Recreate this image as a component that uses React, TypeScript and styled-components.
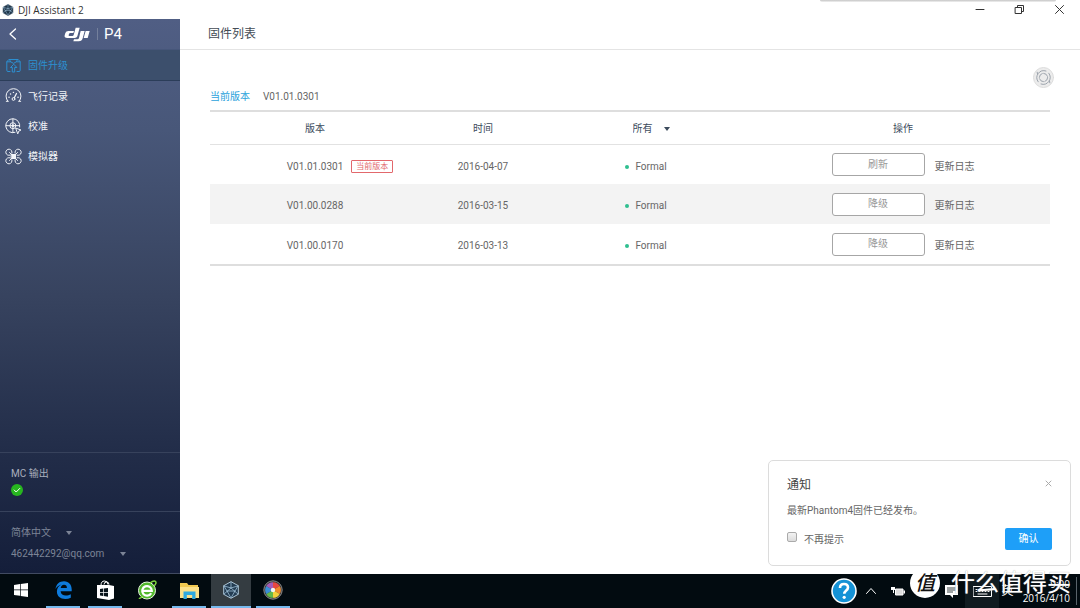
import React from "react";
import styled, { createGlobalStyle, css } from "styled-components";

const GlobalStyle = createGlobalStyle`
  *, *::before, *::after { box-sizing: border-box; }
  body {
    margin: 0;
    background: #fff;
    color: #666;
    font: 10px/16px Roboto, "Noto Sans CJK SC", sans-serif;
  }
  button, select, input { font: inherit; color: inherit; margin: 0; }
  button { padding: 0; border: 0; background: none; cursor: pointer; }
  a { color: inherit; text-decoration: none; }
  svg { display: block; flex: none; }
`;

const Desktop = styled.div`
  position: relative;
  display: flex;
  flex-direction: column;
  min-height: 100vh;
`;

const TitleBar = styled.header`
  display: flex;
  align-items: center;
  gap: 4px;
  height: 19px;
  padding: 0 14px 0 2px;
  color: #333;
  font-family: "Open Sans", sans-serif;
`;

const WindowTitle = styled.span`
  flex: 1;
`;

const WindowControls = styled.div`
  display: flex;
  gap: 28px;
`;

const BackWindowEdge = styled.div`
  position: absolute;
  top: 0;
  right: 24px;
  width: 236px;
  height: 2px;
  border-radius: 0 0 2px 2px;
  background: linear-gradient(#c4c4c4, #f2f2f2);
`;

const Workspace = styled.div`
  display: flex;
  flex: 1;
`;

const Sidebar = styled.aside`
  display: flex;
  flex-direction: column;
  width: 180px;
  border-bottom: 1px solid #414b62;
  background: linear-gradient(#505e84 0, #485779 20%, #37435f 50%, #222d49 78%, #141e3a 100%);
`;

const Brand = styled.div`
  display: flex;
  align-items: center;
  height: 31px;
  padding-left: 8px;
  border-bottom: 1px solid #46567a;
  color: #fff;
`;

const BackButton = styled.button`
  margin-right: 47px;
`;

const Model = styled.span`
  margin-left: 7px;
  padding-left: 6px;
  border-left: 1px solid #74809c;
  font-size: 15px;
  line-height: 12px;
`;

const Nav = styled.nav`
  flex: 1;
`;

const NavItem = styled.a<{ $active?: boolean }>`
  display: flex;
  align-items: center;
  gap: 6px;
  height: 30px;
  padding-left: 5px;
  color: #f2f4f8;
  ${(p) =>
    p.$active &&
    css`
      height: 31px;
      border-bottom: 1px solid #2b3d59;
      background: #3c4f6c;
      color: #2d8fd0;
    `}
`;

const NavText = styled.span`
  padding-top: 2px;
`;

const SideSection = styled.section<{ $tall?: boolean }>`
  display: flex;
  flex-direction: column;
  align-items: flex-start;
  gap: ${(p) => (p.$tall ? 5 : 2)}px;
  padding: 13px 11px ${(p) => (p.$tall ? 11 : 15)}px;
  border-top: 1px solid #37425c;
  color: ${(p) => (p.$tall ? "#7c8496" : "#a9afbd")};
`;

const SelectWrap = styled.label`
  position: relative;
  display: inline-flex;
  align-items: center;
`;

const Select = styled.select<{ $gap: number }>`
  appearance: none;
  height: 16px;
  padding: 0 ${(p) => p.$gap + 7}px 0 0;
  border: 0;
  background: transparent;
`;

const Caret = styled.svg`
  position: absolute;
  right: 0;
  pointer-events: none;
`;

const Main = styled.main`
  position: relative;
  flex: 1;
`;

const PageTitle = styled.h1`
  height: 31px;
  margin: 0;
  padding: 0 28px;
  border-bottom: 1px solid #e4e4e4;
  color: #444b55;
  font-size: 12px;
  font-weight: 400;
  line-height: 31px;
`;

const Content = styled.div`
  display: flex;
  flex-direction: column;
  padding: 17px 30px 0;
`;

const RefreshButton = styled.button`
  align-self: flex-end;
  margin-right: -4px;
`;

const Current = styled.p`
  display: flex;
  gap: 13px;
  margin: 0 0 5px;
  line-height: 17px;
`;

const CurrentLabel = styled.span`
  color: #2ba3dc;
`;

const Table = styled.table`
  width: 100%;
  table-layout: fixed;
  border-spacing: 0;
  border-top: 2px solid #dedede;
  border-bottom: 2px solid #dedede;
  text-align: center;
`;

const Col = styled.col<{ $share: number }>`
  width: ${(p) => p.$share}%;
`;

const HeadCell = styled.th`
  height: 32px;
  padding: 2px 0 0;
  color: #3c4b5c;
  font-weight: 400;
`;

const Row = styled.tr`
  &:nth-child(even) { background: #f3f3f3; }
  &:first-child td { border-top: 1px solid #e2e2e2; }
`;

const Cell = styled.td`
  height: 40px;
  padding: 4px 0 0;
`;

const ActionCell = styled.td`
  padding: 0;
`;

const Anchor = styled.span`
  position: relative;
`;

const CurrentBadge = styled.span`
  position: absolute;
  left: 100%;
  top: -1px;
  width: 42px;
  margin-left: 8px;
  border: 1px solid #e2686c;
  border-radius: 1px;
  background: #fff;
  color: #e2686c;
  font-size: 8px;
  line-height: 11px;
`;

const Dot = styled.i`
  position: absolute;
  right: 100%;
  top: 4px;
  width: 4px;
  height: 4px;
  margin-right: 6px;
  border-radius: 50%;
  background: #2fbf8f;
`;

const Actions = styled.div`
  display: flex;
  justify-content: center;
  align-items: center;
  gap: 10px;
`;

const OutlineButton = styled.button`
  width: 93px;
  height: 23px;
  border: 1px solid #a6a6a6;
  border-radius: 3px;
  background: #fff;
  color: #999;
`;

const LogLink = styled.a`
  padding-top: 4px;
`;

const Notice = styled.section`
  position: absolute;
  right: 9px;
  bottom: 8px;
  width: 303px;
  padding: 16px 18px 15px;
  border: 1px solid #dcdcdc;
  border-radius: 5px;
  background: #fff;
`;

const NoticeLine = styled.div`
  display: flex;
  align-items: center;
  justify-content: space-between;
`;

const NoticeTitle = styled.h2`
  margin: 0;
  color: #444;
  font-size: 12px;
  font-weight: 400;
`;

const CloseButton = styled.button`
  padding-bottom: 4px;
`;

const NoticeText = styled.p`
  margin: 10px 0 9px;
`;

const CheckLabel = styled.label`
  display: flex;
  align-items: center;
  gap: 7px;
  padding-top: 2px;
`;

const Checkbox = styled.input`
  appearance: none;
  width: 10px;
  height: 10px;
  margin-bottom: 6px;
  border: 1px solid #aaa;
  border-radius: 2px;
  background: linear-gradient(#f3f3f3, #dcdcdc);
`;

const ConfirmButton = styled.button`
  width: 47px;
  height: 22px;
  border-radius: 2px;
  background: #1e9ff8;
  color: #fff;
`;

const Taskbar = styled.footer`
  display: flex;
  justify-content: space-between;
  height: 34px;
  background: #020b10;
  color: #fff;
`;

const Apps = styled.div`
  display: flex;
`;

const AppButton = styled.button<{ $state?: "open" | "active" }>`
  display: flex;
  align-items: center;
  justify-content: center;
  width: ${(p) => (p.$state === "active" ? 40 : 34)}px;
  margin: 0 ${(p) => (p.$state === "active" ? 1 : 4)}px;
  border-bottom: 2px solid ${(p) => (p.$state ? "#76b9ed" : "transparent")};
  background: ${(p) => (p.$state === "active" ? "#343c41" : "none")};
`;

const Tray = styled.div`
  display: flex;
  align-items: center;
  padding-right: 3px;
`;

const TrayButton = styled.button<{ $width: number; $lit?: boolean }>`
  display: flex;
  align-items: center;
  justify-content: center;
  width: ${(p) => p.$width}px;
  height: 34px;
  background: ${(p) => (p.$lit ? "#101b20" : "none")};
  color: #fff;
  font-size: 12px;
`;

const Clock = styled.time`
  width: 61px;
  padding-right: 6px;
  border-right: 1px solid #59636a;
  font: 10px/14px "Open Sans", sans-serif;
  text-align: right;
`;

const Watermark = styled.div`
  position: absolute;
  right: 9px;
  bottom: 10px;
  display: flex;
  align-items: center;
  gap: 11px;
  color: #fff;
  font-size: 24px;
  line-height: 30px;
  text-shadow: 0 0 1px #999;
  pointer-events: none;
`;

const Seal = styled.span`
  width: 30px;
  height: 30px;
  border-radius: 50%;
  background: #fff;
  color: #111;
  font: italic 500 20px/28px "Noto Sans CJK SC", sans-serif;
  text-align: center;
  text-shadow: none;
`;

const line = { fill: "none", stroke: "currentColor", strokeLinecap: "round", strokeLinejoin: "round" } as const;

const CubeIcon = ({ size, dark }: { size: number; dark?: boolean }) => (
  <svg width={size} height={size} viewBox="0 0 16 16" aria-hidden="true">
    <path d="M8 .6 14.5 4.2v7.6L8 15.4 1.5 11.8V4.2z" fill={dark ? "#1d3448" : "#233c52"} stroke={dark ? "#2b4052" : "#b9d2e4"} strokeWidth=".8" />
    <path d="M8 .8v5.4L1.8 11.6M8 6.2l6.2 5.4M1.8 4.4 8 6.2l6.2-1.8M4.6 9.2 8 15l3.4-5.8zM4.6 9.2 1.8 4.4M11.4 9.2l2.8-4.8" {...line} stroke="#9fc0d8" strokeWidth=".7" />
  </svg>
);

const DjiLogo = () => (
  <svg width="26" height="15" viewBox="0 0 78 45" role="img" aria-label="DJI">
    <path d="M35 2h12l-7 26q-2 5-8 5H10Q0 33 2 25l2-7q2-6 9-6h17l-2 6H19q-3 0-4 3l-1 3q-1 3 2 3h9q3 0 4-3z" fill="#fff" />
    <path d="M50 12h12l-6 22q-2 9-12 9H28l2-6h10q4 0 5-4z" fill="#fff" />
    <path d="M65 12h12l-6 21H59z" fill="#fff" />
  </svg>
);

const FirmwareIcon = () => (
  <svg width="17" height="17" viewBox="0 0 17 17" {...line} aria-hidden="true">
    <path d="M5 14.500H3q-1.200 0-1.200-1.200V4.800L3.800 2.500h9.400l2 2.300v8.500q0 1.200-1.200 1.200h-2M2 4.800h3.700L4.500 2.700M15 4.800h-3.700l1.200-2.100M5.700 4.800 8.500 6.400l2.800-1.600" />
    <path d="M8.500 7.500 5.500 10.500h1.800v4.500h2.400v-4.500h1.800z" />
  </svg>
);

const GaugeIcon = () => (
  <svg width="17" height="17" viewBox="0 0 17 17" {...line} aria-hidden="true">
    <path d="M3 13.300A7.500 7.500 0 1 1 14 13.300M1.300 13.300H3M14 13.300h1.700" />
    <path d="m11.500 5.500-2.200 4.200" strokeWidth="1.300" />
    <circle cx="8.500" cy="11" r="1.400" />
    <path d="M4 9.200h.1M5.500 6h.1M8.400 4.400h.1M13 9.200h.1" strokeWidth="1.400" />
  </svg>
);

const CalibrateIcon = () => (
  <svg width="17" height="17" viewBox="0 0 17 17" {...line} aria-hidden="true">
    <path d="M10 14.400A7 7 0 1 1 14.700 9" />
    <circle cx="7.900" cy="7.700" r="3" />
    <path d="M7.900 1v13.500M1 7.700h13.500" />
    <circle cx="7.900" cy="7.700" r="1" fill="currentColor" />
    <path d="m11 10.200 5 1.800-2.200 1.100-.9 2.400z" fill="#465577" />
  </svg>
);

const DroneIcon = () => (
  <svg width="17" height="17" viewBox="0 0 17 17" {...line} aria-hidden="true">
    <path d="M6.900 5.200A3.100 3.100 0 1 0 5 7.200M10.100 5.200A3.100 3.100 0 1 1 12 7.200M6.900 11.800A3.100 3.100 0 1 1 5 9.800M10.100 11.800A3.100 3.100 0 1 0 12 9.800" />
    <path d="m4.500 4.500 8 8M12.500 4.500l-8 8" />
    <path d="M6.500 6.500h4v4h-4z" fill="currentColor" />
  </svg>
);

const Dropdown = ({ label, value, gap }: { label: string; value: string; gap: number }) => (
  <SelectWrap>
    <Select aria-label={label} $gap={gap} defaultValue={value}>
      <option>{value}</option>
    </Select>
    <Caret width="6" height="4" viewBox="0 0 6 4">
      <path d="M0 0h6L3 4z" fill="currentColor" />
    </Caret>
  </SelectWrap>
);

const firmware = [
  { version: "V01.01.0301", date: "2016-04-07", action: "刷新", current: true },
  { version: "V01.00.0288", date: "2016-03-15", action: "降级", current: false },
  { version: "V01.00.0170", date: "2016-03-13", action: "降级", current: false },
];

const FirmwareTable = () => (
  <Table>
    <colgroup>
      <Col $share={25} />
      <Col $share={15} />
      <Col $share={25} />
      <Col $share={35} />
    </colgroup>
    <thead>
      <tr>
        <HeadCell scope="col">版本</HeadCell>
        <HeadCell scope="col">时间</HeadCell>
        <HeadCell scope="col">
          <Dropdown label="类型" value="所有" gap={10} />
        </HeadCell>
        <HeadCell scope="col">操作</HeadCell>
      </tr>
    </thead>
    <tbody>
      {firmware.map((f) => (
        <Row key={f.version}>
          <Cell>
            <Anchor>
              {f.version}
              {f.current && <CurrentBadge>当前版本</CurrentBadge>}
            </Anchor>
          </Cell>
          <Cell>{f.date}</Cell>
          <Cell>
            <Anchor>
              <Dot />
              Formal
            </Anchor>
          </Cell>
          <ActionCell>
            <Actions>
              <OutlineButton>{f.action}</OutlineButton>
              <LogLink href="#log">更新日志</LogLink>
            </Actions>
          </ActionCell>
        </Row>
      ))}
    </tbody>
  </Table>
);

const Notification = () => (
  <Notice>
    <NoticeLine>
      <NoticeTitle>通知</NoticeTitle>
      <CloseButton aria-label="关闭">
        <svg width="7" height="7" viewBox="0 0 7 7" {...line} stroke="#aaa">
          <path d="m1 1 5 5m0-5-5 5" />
        </svg>
      </CloseButton>
    </NoticeLine>
    <NoticeText>最新Phantom4固件已经发布。</NoticeText>
    <NoticeLine>
      <CheckLabel>
        <Checkbox type="checkbox" />
        不再提示
      </CheckLabel>
      <ConfirmButton>确认</ConfirmButton>
    </NoticeLine>
  </Notice>
);

const wheel = ["#e8473f", "#f08a2c", "#f4d03a", "#64b84a", "#3a8fd6", "#a45bb8"];

const SystemBar = () => (
  <Taskbar>
    <Apps>
      <AppButton aria-label="开始">
        <svg width="14" height="14" viewBox="0 0 14 14" fill="#fff">
          <path d="M0 2l6-.9v5.500H0zM6.700 1 14 0v6.600H6.700zM0 7.300h6v5.500L0 12zM6.700 7.300H14V14l-7.300-1z" />
        </svg>
      </AppButton>
      <AppButton aria-label="Edge" $state="open">
        <svg width="17" height="18" viewBox="0 0 17 18">
          <path d="M.5 8C1.200 3 4.500.3 9 .3c5 0 7.700 3.700 7.700 8v2H5.600c.2 3 2.500 4.200 5.200 4.200 1.900 0 3.600-.5 5-1.300v3.500c-1.600.8-3.500 1.200-5.500 1.200-5 0-8.400-2.900-8.400-7.500 0-3 1.700-5.500 4.500-6.800C3.700 4.400 1.700 5.800.5 8zm5.200-1h6.200c0-2-1-3.200-2.900-3.200S6 5.100 5.700 7z" fill="#0e7bdc" />
        </svg>
      </AppButton>
      <AppButton aria-label="应用商店" $state="open">
        <svg width="19" height="20" viewBox="0 0 19 20">
          <path d="M5 5.500Q5 1 8.500 1T12 4.500M8 4.500Q8 2 10.500 2T13 4.500" fill="none" stroke="#fff" />
          <path d="M1 5h12l5 1v12.500L13 20 1 18z" fill="#fff" />
          <path d="M4 9l3-.4V12H4zM7.700 8.500 12 8v4H7.700zM4 12.700h3V16l-3-.4zM7.700 12.700H12v4l-4.300-.6z" fill="#07131a" />
        </svg>
      </AppButton>
      <AppButton aria-label="浏览器">
        <svg width="20" height="20" viewBox="0 0 20 20">
          <circle cx="10" cy="10.500" r="8.500" fill="#52b82c" stroke="#e9f7df" />
          <path d="M14.200 13.200A4.800 4.800 0 1 1 14.800 10.800H6" fill="none" stroke="#fff" strokeWidth="2.200" />
          <path d="M2 18C3 19 5 17 6 16M13 3Q17 0 18.500 1.500T17 6" fill="none" stroke="#7ed53e" strokeWidth="1.500" />
        </svg>
      </AppButton>
      <AppButton aria-label="文件资源管理器" $state="open">
        <svg width="19" height="17" viewBox="0 0 19 17">
          <path d="M0 1h7l1.500 2H18v13H0z" fill="#f0c850" />
          <path d="M0 5h19v11H0z" fill="#fbe08a" />
          <path d="M3.500 9.500h12V17h-3.300v-4H6.800v4H3.500z" fill="#2fa9e0" />
        </svg>
      </AppButton>
      <AppButton aria-label="DJI Assistant 2" $state="active">
        <CubeIcon size={18} />
      </AppButton>
      <AppButton aria-label="图片查看器" $state="open">
        <svg width="20" height="20" viewBox="-10 -10 20 20">
          <circle r="9.200" fill="#3b3b3b" stroke="#8a8a8a" />
          {wheel.map((color, i) => (
            <path key={color} d="M0 0V-7.800A7.800 7.800 0 0 1 6.800-3.900z" fill={color} transform={`rotate(${i * 60})`} />
          ))}
          <circle r="2.200" fill="#f4f4f4" />
        </svg>
      </AppButton>
    </Apps>
    <Tray>
      <TrayButton aria-label="帮助" $width={28}>
        <svg width="26" height="26" viewBox="0 0 26 26">
          <circle cx="13" cy="13" r="12" fill="#1592d6" stroke="#fff" strokeWidth="1.600" />
          <path d="M9 10q0-4 4-4t4 3.500c0 3-3.700 3-3.700 6.300" fill="none" stroke="#fff" strokeWidth="2.600" />
          <circle cx="13.200" cy="19.300" r="1.600" fill="#fff" />
        </svg>
      </TrayButton>
      <TrayButton aria-label="显示隐藏的图标" $width={26}>
        <svg width="10" height="6" viewBox="0 0 10 6" {...line}>
          <path d="m.5 5.500 4.500-5 4.500 5" />
        </svg>
      </TrayButton>
      <TrayButton aria-label="电源" $width={28}>
        <svg width="14" height="10" viewBox="0 0 14 10">
          <path d="M4.500 3H12v6H4.500z" fill="#ddd" stroke="#fff" />
          <path d="M12.500 4.500H14v3h-1.500zM0 1h4v3H3v3H2V4H0z" fill="#fff" />
        </svg>
      </TrayButton>
      <TrayButton aria-label="输入指示" $width={26} />
      <TrayButton aria-label="操作中心" $width={27}>
        <svg width="13" height="13" viewBox="0 0 13 13">
          <path d="M0 0h13v10H8v3l-3-3H0z" fill="#fff" />
          <path d="M2 3h9M2 5h9M2 7h6" stroke="#0b161b" strokeWidth=".8" />
        </svg>
      </TrayButton>
      <TrayButton aria-label="触摸键盘" $width={34} $lit>
        <svg width="19" height="11" viewBox="0 0 19 11" {...line}>
          <path d="M.5.5h18v10H.5z" />
          <path d="M3 3.500h13M3 5.500h13" strokeDasharray="1 2" />
          <path d="M5 8h9" />
        </svg>
      </TrayButton>
      <TrayButton $width={17}>英</TrayButton>
      <Clock>
        9:00
        <br />
        2016/4/10
      </Clock>
    </Tray>
  </Taskbar>
);

export default function App() {
  return (
    <Desktop>
      <GlobalStyle />
      <TitleBar>
        <CubeIcon size={12} dark />
        <WindowTitle>DJI Assistant 2</WindowTitle>
        <WindowControls>
          <button aria-label="最小化">
            <svg width="12" height="12" viewBox="0 0 12 12" {...line}>
              <path d="M2 5.500h8" />
            </svg>
          </button>
          <button aria-label="还原">
            <svg width="12" height="12" viewBox="0 0 12 12" {...line}>
              <path d="M1.500 3.500h6v6h-6zM3.500 3.500v-2h6v6h-2" />
            </svg>
          </button>
          <button aria-label="关闭">
            <svg width="12" height="12" viewBox="0 0 12 12" {...line}>
              <path d="m1.500 1.500 8 8m0-8-8 8" />
            </svg>
          </button>
        </WindowControls>
      </TitleBar>
      <BackWindowEdge />
      <Workspace>
        <Sidebar>
          <Brand>
            <BackButton aria-label="返回">
              <svg width="9" height="12" viewBox="0 0 9 12" {...line} strokeWidth="1.300">
                <path d="M7.500 1 2 6l5.500 5" />
              </svg>
            </BackButton>
            <DjiLogo />
            <Model>P4</Model>
          </Brand>
          <Nav>
            <NavItem href="#firmware" $active>
              <FirmwareIcon />
              <NavText>固件升级</NavText>
            </NavItem>
            <NavItem href="#records">
              <GaugeIcon />
              <NavText>飞行记录</NavText>
            </NavItem>
            <NavItem href="#calibration">
              <CalibrateIcon />
              <NavText>校准</NavText>
            </NavItem>
            <NavItem href="#simulator">
              <DroneIcon />
              <NavText>模拟器</NavText>
            </NavItem>
          </Nav>
          <SideSection>
            MC 输出
            <svg width="12" height="12" viewBox="0 0 12 12" role="img" aria-label="正常">
              <circle cx="6" cy="6" r="6" fill="#27b51f" />
              <path d="m3.200 6 2 2 3.600-3.600" {...line} stroke="#fff" />
            </svg>
          </SideSection>
          <SideSection $tall>
            <Dropdown label="语言" value="简体中文" gap={14} />
            <Dropdown label="账号" value="462442292@qq.com" gap={14} />
          </SideSection>
        </Sidebar>
        <Main>
          <PageTitle>固件列表</PageTitle>
          <Content>
            <RefreshButton aria-label="刷新列表">
              <svg width="21" height="21" viewBox="0 0 21 21" {...line}>
                <circle cx="10.500" cy="10.500" r="10" fill="#ececec" stroke="#dcdcdc" />
                <g stroke="#949ca6" strokeWidth=".9">
                  <path d="M5.200 14.800A7 7 0 0 1 13 4M15.800 6.200A7 7 0 0 1 8 17M4.500 7 4.200 5.200M16.500 14l.3 1.800" />
                  <circle cx="10.500" cy="10.500" r="4.200" strokeDasharray="5 1.500" />
                </g>
              </svg>
            </RefreshButton>
            <Current>
              <CurrentLabel>当前版本</CurrentLabel>
              V01.01.0301
            </Current>
            <FirmwareTable />
          </Content>
          <Notification />
        </Main>
      </Workspace>
      <SystemBar />
      <Watermark>
        <Seal>值</Seal>
        什么值得买
      </Watermark>
    </Desktop>
  );
}
